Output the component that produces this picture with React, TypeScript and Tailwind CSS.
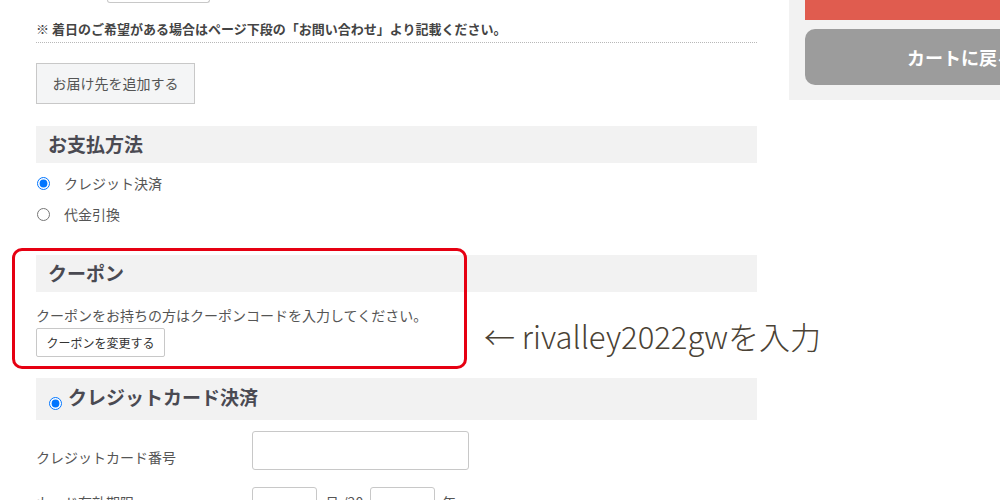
export default function App() {
  return (
    <div className="relative w-[1000px] h-[500px] overflow-hidden bg-white flex items-start font-['Noto_Sans_CJK_JP',sans-serif] text-[#444]">
      <div className="ml-[36px] w-[721px] shrink-0">
        <div className="ml-[71px] w-[103px] h-[3px] border-x border-b border-[#c8c8c8] rounded-b-[3px]"></div>

        <div className="mt-[16px] pb-[3px] border-b border-dotted border-[#b8b8b8] text-[13px] leading-[20px] font-bold text-[#444]">
          ※ 着日のご希望がある場合はページ下段の「お問い合わせ」より記載ください。
        </div>

        <button className="mt-[20px] w-[159px] h-[41px] bg-[#f4f5f6] border border-[#c8c8c8] text-[14px] text-[#555] flex items-center justify-center">
          お届け先を追加する
        </button>

        <div className="mt-[22px] h-[37px] bg-[#f2f2f2] pl-[12px] flex items-center text-[19px] font-bold text-[#4a4a52]">
          お支払方法
        </div>

        <div className="mt-[5px]">
          <label className="h-[31px] flex items-center text-[14px] text-[#555]">
            <input type="radio" name="pay" defaultChecked className="ml-[1px] w-[13px] h-[13px] m-0 accent-[#0075ff]" />
            <span className="ml-[14px]">クレジット決済</span>
          </label>
          <label className="h-[31px] flex items-center text-[14px] text-[#555]">
            <input type="radio" name="pay" className="ml-[1px] w-[13px] h-[13px] m-0" />
            <span className="ml-[14px]">代金引換</span>
          </label>
        </div>

        <div className="mt-[25px] h-[37px] bg-[#f2f2f2] pl-[12px] flex items-center text-[19px] font-bold text-[#4a4a52]">
          クーポン
        </div>
        <div className="mt-[13px] text-[14px] leading-[20px] text-[#555]">
          クーポンをお持ちの方はクーポンコードを入力してください。
        </div>
        <button className="mt-[3px] w-[129px] h-[29px] bg-white border border-[#c8c8c8] rounded-[2px] text-[12px] text-[#333] flex items-center justify-center">
          クーポンを変更する
        </button>

        <div className="mt-[21px] h-[42px] bg-[#f2f2f2] pl-[13px] flex items-center text-[19px] font-bold text-[#4a4a52]">
          <input type="radio" defaultChecked className="mt-[8px] w-[13px] h-[13px] m-0 accent-[#0075ff]" />
          <span className="ml-[6px] -mt-[4px]">クレジットカード決済</span>
        </div>

        <div className="mt-[11px] flex items-end">
          <div className="w-[216px] pb-[2px] text-[14px] text-[#555]">クレジットカード番号</div>
          <div className="w-[217px] h-[39px] border border-[#c8c8c8] rounded-[3px] bg-white"></div>
        </div>

        <div className="mt-[17px] flex items-start">
          <div className="w-[216px] pt-[5px] text-[14px] text-[#555]">カード有効期限</div>
          <div className="w-[65px] h-[36px] border border-[#c8c8c8] rounded-[3px] bg-white"></div>
          <div className="w-[53px] pt-[5px] pl-[8px] text-[14px] text-[#555]">月 /20</div>
          <div className="w-[65px] h-[36px] border border-[#c8c8c8] rounded-[3px] bg-white"></div>
          <div className="pt-[5px] pl-[7px] text-[14px] text-[#555]">年</div>
        </div>
      </div>

      <div className="ml-[32px] w-[344px] shrink-0 h-[100px] bg-[#f2f2f2] px-[16px]">
        <div className="h-[20px] bg-[#e05c4f]"></div>
        <div className="mt-[9px] h-[56px] rounded-[10px] bg-[#9c9c9c] flex items-center justify-center text-[18px] font-bold text-white">
          カートに戻る
        </div>
      </div>

      <div className="absolute left-[12px] top-[248px] w-[455px] h-[121px] border-[3px] border-[#e60012] rounded-[10px] pointer-events-none"></div>

      <div className="absolute left-[484px] top-[316px] text-[31px] leading-[40px] text-[#4a4235] font-light whitespace-nowrap">
        ← rivalley2022gwを入力
      </div>
    </div>
  )
}
